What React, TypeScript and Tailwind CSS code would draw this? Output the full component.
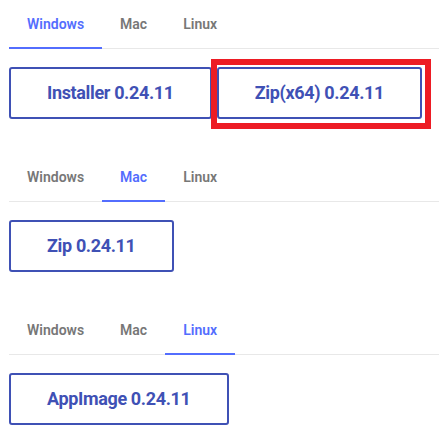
import React from "react";

const tabs = ["Windows", "Mac", "Linux"];

const Tabs = ({ active }: { active: string }) => (
  <div className="flex border-b border-[#e8e8e8]">
    {tabs.map((t) => (
      <div
        key={t}
        className={`relative flex h-12 items-center px-[18px] text-sm font-semibold ${
          t === active ? "text-[#536dfe]" : "text-[#777777]"
        }`}
      >
        {t}
        {t === active && (
          <span className="absolute -bottom-px left-0 right-0 h-[2px] bg-[#536dfe]" />
        )}
      </div>
    ))}
  </div>
);

const DownloadButton = ({ children }: any) => (
  <button className="inline-flex h-[52px] items-center rounded-[3px] border-2 border-[#3f51b5] bg-white px-[36px] text-[18px] font-bold leading-6 tracking-[-0.35px] text-[#3f51b5]">
    {children}
  </button>
);

const Section = ({ active, children }: any) => (
  <div className="mb-[34px] flex flex-col">
    <Tabs active={active} />
    <div className="mt-[18px] flex gap-[5px]">{children}</div>
  </div>
);

export default function App() {
  return (
    <div
      className="min-h-[448px] w-[439px] bg-white pl-[9px]"
      style={{ fontFamily: "Roboto, 'Liberation Sans', sans-serif" }}
    >
      <Section active="Windows">
        <DownloadButton>Installer 0.24.11</DownloadButton>
        <div className="relative">
          <DownloadButton>Zip(x64) 0.24.11</DownloadButton>
          <span className="pointer-events-none absolute -bottom-[10px] -left-[6px] -right-[9px] -top-[8px] border-[6px] border-[#ed1c24]" />
        </div>
      </Section>
      <Section active="Mac">
        <DownloadButton>Zip 0.24.11</DownloadButton>
      </Section>
      <Section active="Linux">
        <DownloadButton>AppImage 0.24.11</DownloadButton>
      </Section>
    </div>
  );
}
